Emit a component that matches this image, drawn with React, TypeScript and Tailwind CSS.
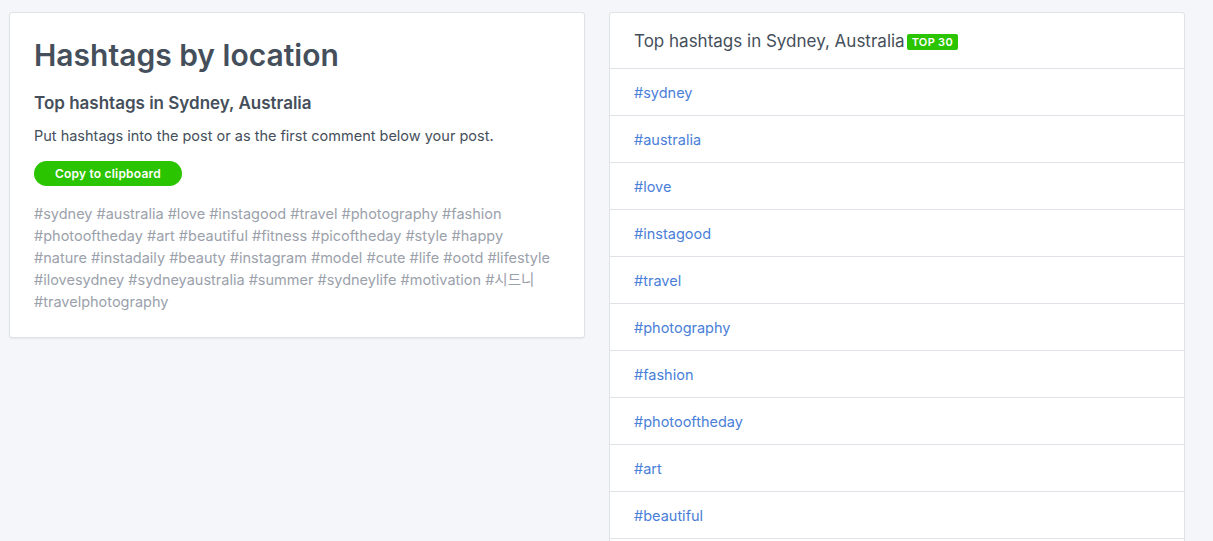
const tags = [
  'sydney', 'australia', 'love', 'instagood', 'travel', 'photography', 'fashion',
  'photooftheday', 'art', 'beautiful', 'fitness', 'picoftheday', 'style', 'happy',
  'nature', 'instadaily', 'beauty', 'instagram', 'model', 'cute', 'life', 'ootd',
  'lifestyle', 'ilovesydney', 'sydneyaustralia', 'summer', 'sydneylife', 'motivation',
  '시드니', 'travelphotography',
]

export default function App() {
  return (
    <div
      className="min-h-screen bg-[#f5f6fa] px-[9px] pt-3 flex items-start gap-6"
      style={{ fontFamily: 'Inter, "Noto Sans CJK KR", sans-serif' }}
    >
      {/* Left card */}
      <div className="w-[576px] bg-white border border-[#dfe3e8] rounded-[3px] shadow-[0_1px_2px_rgba(0,0,0,0.06)] px-6 pt-[24px] pb-[24px]">
        <h1 className="text-[30px] leading-[36px] font-semibold text-[#454f5b]">Hashtags by location</h1>
        <h2 className="mt-[19px] text-[17px] leading-[22px] font-semibold text-[#454f5b]">
          Top hashtags in Sydney, Australia
        </h2>
        <p className="mt-[11px] text-[14.5px] leading-[22px] text-[#454f5b]">
          Put hashtags into the post or as the first comment below your post.
        </p>
        <button className="mt-[14px] h-[25px] px-[21px] rounded-full bg-[#2bc400] text-white text-[12px] font-semibold tracking-[0.2px]">
          Copy to clipboard
        </button>
        <p className="mt-[17px] text-[14.5px] leading-[22px] text-[#9ba1ab]">
          {tags.map((t) => '#' + t).join(' ')}
        </p>
      </div>

      {/* Right card */}
      <div className="w-[576px] bg-white border border-[#dfe3e8] rounded-t-[3px]">
        <div className="h-[56px] px-6 pt-[2px] flex items-center gap-[2px] border-b border-[#dfe3e8]">
          <span className="text-[17px] text-[#454f5b]">Top hashtags in Sydney, Australia</span>
          <span className="bg-[#2bc400] text-white text-[11px] font-semibold leading-[16px] px-[5px] rounded-[2px] tracking-[0.3px]">
            TOP 30
          </span>
        </div>
        {tags.map((t) => (
          <div key={t} className="h-[47px] px-6 pt-[2px] flex items-center border-b border-[#dfe3e8]">
            <span className="text-[14.5px] text-[#4a80d8]">#{t}</span>
          </div>
        ))}
      </div>
    </div>
  )
}
